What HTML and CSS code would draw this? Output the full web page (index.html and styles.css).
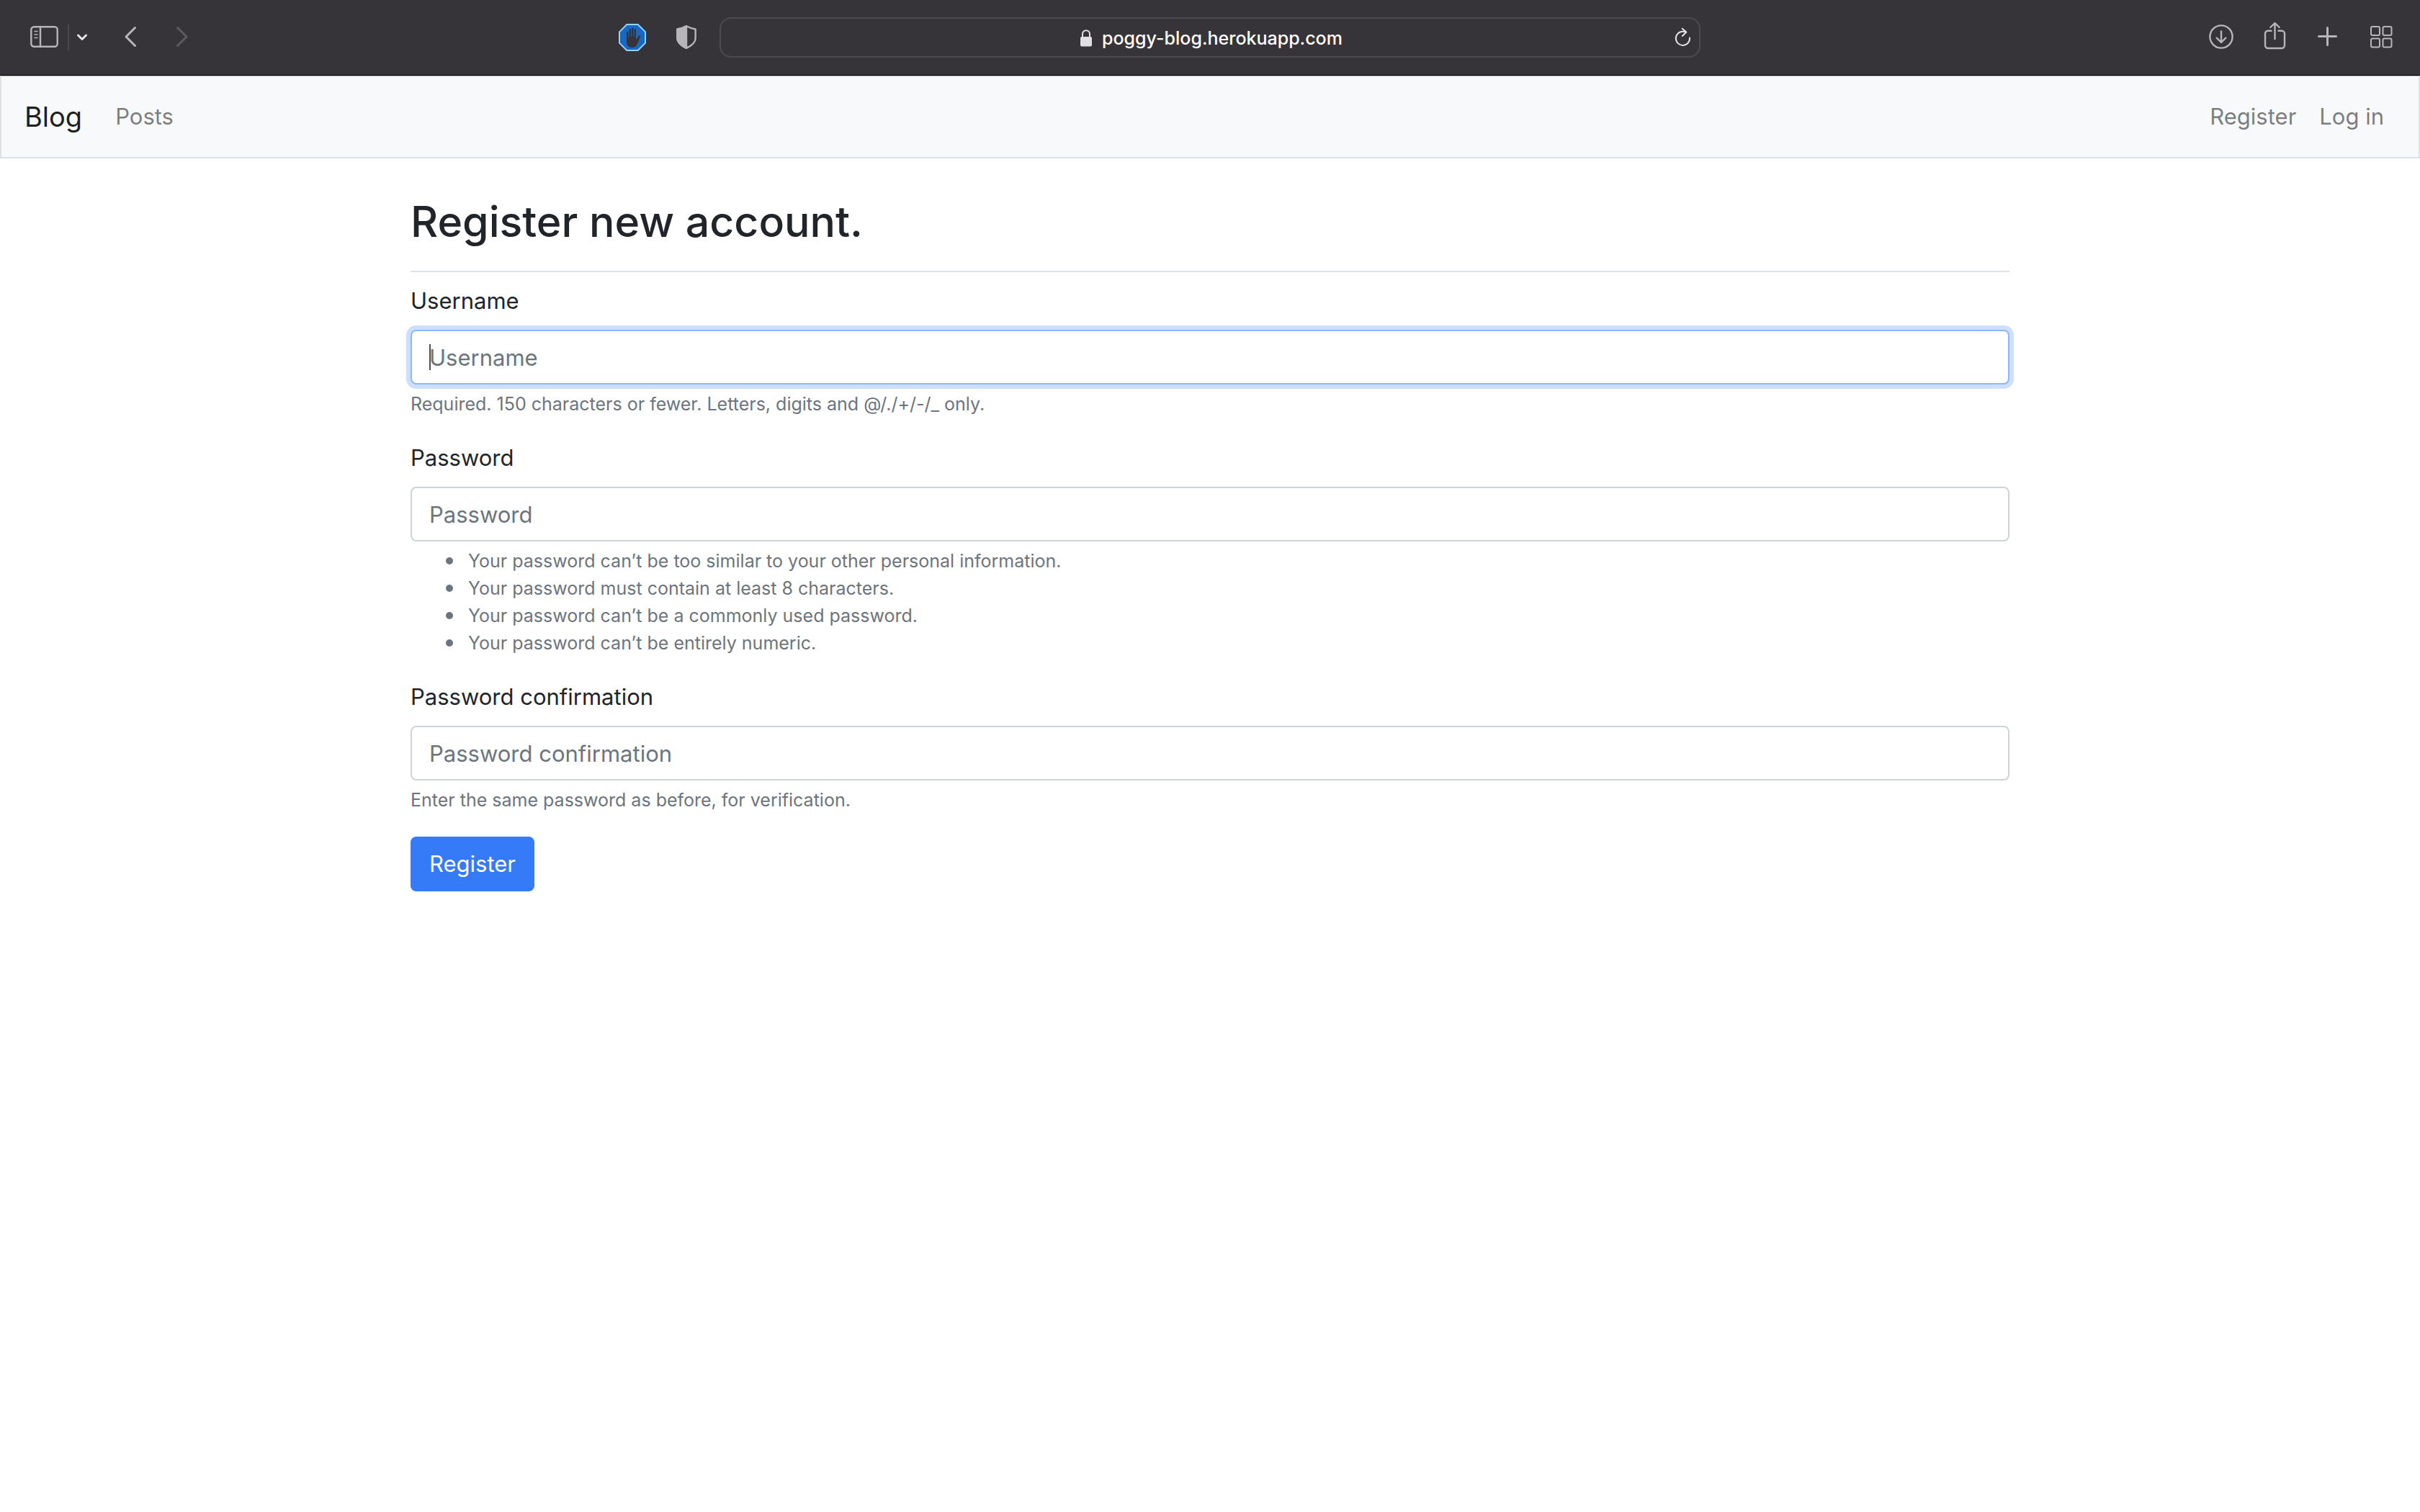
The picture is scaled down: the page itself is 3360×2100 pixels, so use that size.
FILE: index.html
```html
<!DOCTYPE html>
<html lang="en">
<head>
<meta charset="utf-8">
<title>Register</title>
<link rel="stylesheet" href="styles.css">
</head>
<body>
<div class="toolbar">
  <div class="tools tools-left">
    <button class="tool" type="button" aria-label="Sidebar">
      <svg class="icon" viewBox="0 0 40 40"><rect x="1.3" y="5.3" width="36.4" height="27.4" rx="4"/><path d="M14 5v28"/><path class="thin" d="M6 11.5h4M6 16h4M6 20.5h4"/></svg>
    </button>
    <span class="divider"></span>
    <button class="tool tool-small" type="button" aria-label="Tab groups">
      <svg class="icon icon-small bright" viewBox="0 0 20 20"><path d="M4.5 7l5.500 5.500L15.500 7"/></svg>
    </button>
    <button class="tool tool-back" type="button" aria-label="Back">
      <svg class="icon bold" viewBox="0 0 40 40"><path d="M26.500 6.500L14 19l12.500 12.500"/></svg>
    </button>
    <button class="tool tool-forward" type="button" aria-label="Forward" disabled>
      <svg class="icon bold" viewBox="0 0 40 40"><path d="M13.500 6.500L26 19 13.500 31.500"/></svg>
    </button>
    <button class="tool tool-blocker" type="button" aria-label="Content blocker">
      <svg class="icon" viewBox="0 0 40 40"><path class="sign" d="M12.300 2h15.400L38 12.300v15.400L27.700 38H12.300L2 27.700V12.300z"/><path class="hand" d="M12 13.200c0-2 2.400-2 2.400 0v6.600h1.200V9.600c0-2.100 2.500-2.100 2.500 0v9.200h1V8c0-2.100 2.500-2.100 2.500 0v10.800h1V9.600c0-2.100 2.400-2.100 2.400 0V23.500l3.400-5.300c1-1.500 3-1 2.600.4L27.400 28c-1.400 4-4.200 6-7.600 6-5 0-7.800-3.400-7.800-8z"/></svg>
    </button>
    <button class="tool tool-shield" type="button" aria-label="Privacy report">
      <svg class="icon" viewBox="0 0 40 40"><path d="M20 4.300c4 2.200 8 3.500 12.600 4.200v13c0 6-5.600 10-12.600 13.300C13 31.500 7.400 27.500 7.400 21.500v-13C12 7.800 16 6.500 20 4.300z"/><path class="solid" d="M20 4.300C16 6.500 12 7.800 7.400 8.500v13c0 6 5.600 10 12.600 13.300z"/></svg>
    </button>
  </div>
  <div class="address">
    <div class="site">
      <svg class="lock" viewBox="0 0 16 24" aria-hidden="true"><rect x="0" y="10" width="16" height="13.500" rx="2"/><path d="M3 11V6.500C3 -.5 13-.5 13 6.500V11"/></svg>
      <span>poggy-blog.herokuapp.com</span>
    </div>
    <button class="tool reload" type="button" aria-label="Reload">
      <svg class="icon bright-thin" viewBox="0 0 40 40"><path d="M29 20.500a9.600 9.600 0 1 1-9.600-8.800c1.600 0 3 .2 4.600.8M18.700 7.700l5.600 4.800-5.400 5.500"/></svg>
    </button>
  </div>
  <div class="tools tools-right">
    <button class="tool" type="button" aria-label="Downloads">
      <svg class="icon" viewBox="0 0 40 40"><circle cx="19" cy="19" r="15.600"/><path d="M19 11.500V27M12.700 20.700L19 27l6.300-6.300"/></svg>
    </button>
    <button class="tool" type="button" aria-label="Share">
      <svg class="icon" viewBox="0 0 40 40"><path d="M14.500 10.700H10a4 4 0 0 0-4 4V31a4 4 0 0 0 4 4h19a4 4 0 0 0 4-4V14.700a4 4 0 0 0-4-4h-4.500M19.500 22V.500M13.300 6l6.200-6 6.200 6"/></svg>
    </button>
    <button class="tool" type="button" aria-label="New tab">
      <svg class="icon bold" viewBox="0 0 40 40"><path d="M6.500 18.500h24M18.500 6.500v24"/></svg>
    </button>
    <button class="tool" type="button" aria-label="Tab overview">
      <svg class="icon grid" viewBox="0 0 40 40"><rect x="5" y="5" width="12" height="12" rx="2"/><rect x="21.500" y="5" width="12" height="12" rx="2"/><rect x="5" y="21.500" width="12" height="12" rx="2"/><rect x="21.500" y="21.500" width="12" height="12" rx="2"/></svg>
    </button>
  </div>
</div>

<nav class="navbar">
  <a class="brand" href="#">Blog</a>
  <a class="nav-link" href="#">Posts</a>
  <div class="account-links">
    <a class="nav-link" href="#">Register</a>
    <a class="nav-link" href="#">Log in</a>
  </div>
</nav>

<main class="container">
  <h1 class="title">Register new account.</h1>
  <form>
    <div class="group">
      <label class="label" for="username">Username</label>
      <div class="field field-active"><input class="input" id="username" type="text" placeholder="Username"></div>
      <p class="help">Required. 150 characters or fewer. Letters, digits and @/./+/-/_ only.</p>
    </div>
    <div class="group">
      <label class="label" for="password">Password</label>
      <div class="field"><input class="input" id="password" type="password" placeholder="Password"></div>
      <ul class="help rules">
        <li>Your password can’t be too similar to your other personal information.</li>
        <li>Your password must contain at least 8 characters.</li>
        <li>Your password can’t be a commonly used password.</li>
        <li>Your password can’t be entirely numeric.</li>
      </ul>
    </div>
    <div class="group">
      <label class="label" for="confirmation">Password confirmation</label>
      <div class="field"><input class="input" id="confirmation" type="password" placeholder="Password confirmation"></div>
      <p class="help">Enter the same password as before, for verification.</p>
    </div>
    <button class="submit" type="submit">Register</button>
  </form>
</main>
</body>
</html>
```
FILE: styles.css
```css
* {
  box-sizing: border-box;
}

body {
  margin: 0;
  background: #fff;
  color: #212529;
  font-family: Inter, "Liberation Sans", sans-serif;
  font-size: 31px;
  line-height: 48px;
}

button,
input {
  font: inherit;
}

/* Browser toolbar */
.toolbar {
  display: grid;
  grid-template-columns: 1fr minmax(0, 1362px) 1fr;
  align-items: center;
  height: 105px;
  border-bottom: 1px solid #000;
  background: #373439;
}

.tools {
  display: flex;
  align-items: center;
}

.tools-left {
  padding-left: 42px;
}

.tools-right {
  justify-content: flex-end;
  gap: 34px;
  padding-right: 33px;
}

.tool {
  display: flex;
  flex: none;
  padding: 0;
  border: 0;
  background: none;
  color: #b8b5ba;
}

.tool:disabled {
  color: #5d5a60;
}

.tool-small {
  margin-left: 8px;
}

.tool-back {
  margin-left: 37px;
}

.tool-forward {
  margin-left: 32px;
}

.tool-blocker {
  margin-left: auto;
}

.tool-shield {
  margin: 0 26px 0 35px;
}

.divider {
  width: 2px;
  height: 36px;
  margin-left: 12px;
  background: #4b484d;
}

.icon {
  width: 40px;
  height: 40px;
  overflow: visible;
  fill: none;
  stroke: currentColor;
  stroke-width: 2.4;
  stroke-linecap: round;
  stroke-linejoin: round;
}

.icon-small {
  width: 20px;
  height: 20px;
}

.bold {
  stroke-width: 3;
}

.bright {
  color: #e4e2e5;
  stroke-width: 3;
}

.bright-thin {
  color: #e4e2e5;
  stroke-width: 2;
}

.thin {
  stroke-width: 1.6;
}

.grid {
  stroke-width: 2;
}

.solid {
  fill: currentColor;
}

.sign {
  fill: #1767c3;
  stroke: #8fd3ff;
  stroke-width: 2;
  stroke-linejoin: miter;
}

.hand {
  fill: #373439;
  stroke: none;
}

.address {
  display: grid;
  grid-template-columns: 1fr auto 1fr;
  align-items: center;
  height: 56px;
  border: 2px solid #4d4a50;
  border-radius: 16px;
}

.site {
  display: flex;
  grid-column: 2;
  align-items: center;
  gap: 14px;
  padding: 2px 0 0 4px;
  color: #fff;
  font-size: 25px;
  font-weight: 500;
  line-height: 32px;
}

.lock {
  width: 16px;
  height: 24px;
  fill: #e0dfe1;
}

.lock path {
  fill: none;
  stroke: #e0dfe1;
  stroke-width: 2;
}

.reload {
  justify-self: end;
  margin-right: 2px;
}

/* Site navigation */
.navbar {
  display: flex;
  align-items: center;
  padding: 16px 32px;
  border: 2px solid #dee2e6;
  border-top: 1px solid #a9abad;
  background: #f8f9fa;
  line-height: 80px;
}

.brand,
.nav-link {
  text-decoration: none;
}

.brand {
  margin-right: 30px;
  color: rgba(0, 0, 0, 0.9);
  font-size: 38px;
}

.nav-link {
  padding: 0 16px;
  color: rgba(0, 0, 0, 0.5);
}

.account-links {
  display: flex;
  margin-left: auto;
}

/* Registration form */
.container {
  max-width: 2280px;
  margin: 50px auto 0;
  padding: 0 30px;
}

.title {
  margin: 0 0 16px;
  padding-bottom: 30px;
  border-bottom: 2px solid #dee2e6;
  font-size: 59px;
  font-weight: 500;
  line-height: 76px;
}

.group {
  margin-bottom: 32px;
}

.label {
  display: block;
  margin-bottom: 16px;
}

.field {
  position: relative;
}

.input {
  display: block;
  width: 100%;
  height: 76px;
  padding: 12px 24px;
  border: 2px solid #ced4da;
  border-radius: 8px;
  background: #fff;
  color: #495057;
}

.input::placeholder {
  color: #6c757d;
  opacity: 1;
}

.field-active .input {
  border-color: #8bb9fc;
  outline: 0;
  box-shadow: 0 0 0 6px #cddeff;
}

/* Text cursor of the active field */
.field-active::after {
  content: "";
  position: absolute;
  top: 20px;
  left: 26px;
  width: 2px;
  height: 36px;
  background: #495057;
}

.help {
  margin: 8px 0 0;
  color: #6c757d;
  font-size: 25px;
  line-height: 38px;
}

.rules {
  padding: 0 0 0 49px;
  list-style: none;
}

.rules li {
  display: flex;
  align-items: center;
  gap: 21px;
}

.rules li::before {
  content: "";
  width: 10px;
  height: 10px;
  border-radius: 50%;
  background: currentColor;
}

.submit {
  display: block;
  height: 76px;
  padding: 0 26px;
  border: 0;
  border-radius: 8px;
  background: #357af6;
  color: #fff;
}
```
